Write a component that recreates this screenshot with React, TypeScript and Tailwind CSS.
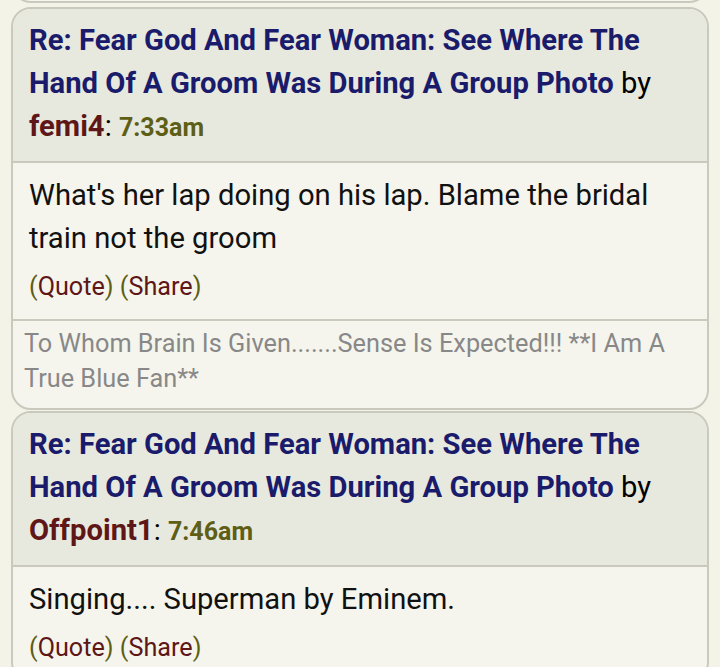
import React from 'react';

interface Post {
  title: string;
  user: string;
  time: string;
  body: string[];
  signature?: string;
}

const posts: Post[] = [
  {
    title: 'Re: Fear God And Fear Woman: See Where The Hand Of A Groom Was During A Group Photo',
    user: 'femi4',
    time: '7:33am',
    body: ["What's her lap doing on his lap. Blame the bridal train not the groom"],
    signature: 'To Whom Brain Is Given.......Sense Is Expected!!! **I Am A True Blue Fan**',
  },
  {
    title: 'Re: Fear God And Fear Woman: See Where The Hand Of A Groom Was During A Group Photo',
    user: 'Offpoint1',
    time: '7:46am',
    body: ['Singing.... Superman by Eminem.'],
  },
];

const PostCard: React.FC<{ post: Post }> = ({ post }) => (
  <div className="mx-[11px] rounded-[20px] border-2 border-[#c9c9be] bg-[#f5f5ed] overflow-hidden">
    {/* Header */}
    <div className="bg-[#e7e9df] border-b-2 border-[#c9c9be] pl-[16px] pr-[12px] pt-[10px] pb-[12px] text-[29.2px] leading-[43px] text-black">
      <span className="font-bold text-[#1b1b6b]">{post.title}</span> by{' '}
      <span className="font-bold text-[#5e1616]">{post.user}</span>:{' '}
      <span className="font-bold text-[#5e5e16] text-[25px]">{post.time}</span>
    </div>

    {/* Body */}
    <div className="pl-[16px] pr-[12px] pt-[11px] pb-[11px]">
      {post.body.map((p, i) => (
        <p key={i} className="text-[29.2px] leading-[43px] text-[#111]">{p}</p>
      ))}
      <div className="mt-[5px] text-[25.2px] leading-[43px] text-[#5e5e16]">
        (<span className="text-[#5e1616]">Quote</span>) (<span className="text-[#5e1616]">Share</span>)
      </div>
    </div>

    {/* Signature */}
    {post.signature && (
      <div className="border-t-2 border-[#c9c9be] pl-[11px] pr-[12px] pt-[5px] pb-[12px] text-[25.3px] leading-[35px] text-[#888888]">
        {post.signature}
      </div>
    )}
  </div>
);

export default function App() {
  return (
    <div className="min-h-[667px] bg-[#f3f3e8] overflow-hidden" style={{ fontFamily: 'Roboto, "Noto Sans", sans-serif' }}>
      <div className="mx-[11px] -mt-[40px] h-[43px] rounded-b-[20px] border-2 border-t-0 border-[#c9c9be] bg-[#f5f5ed]" />
      <div className="mt-[4px] flex flex-col gap-[1px]">
        {posts.map((post, i) => (
          <PostCard key={i} post={post} />
        ))}
      </div>
    </div>
  );
}
